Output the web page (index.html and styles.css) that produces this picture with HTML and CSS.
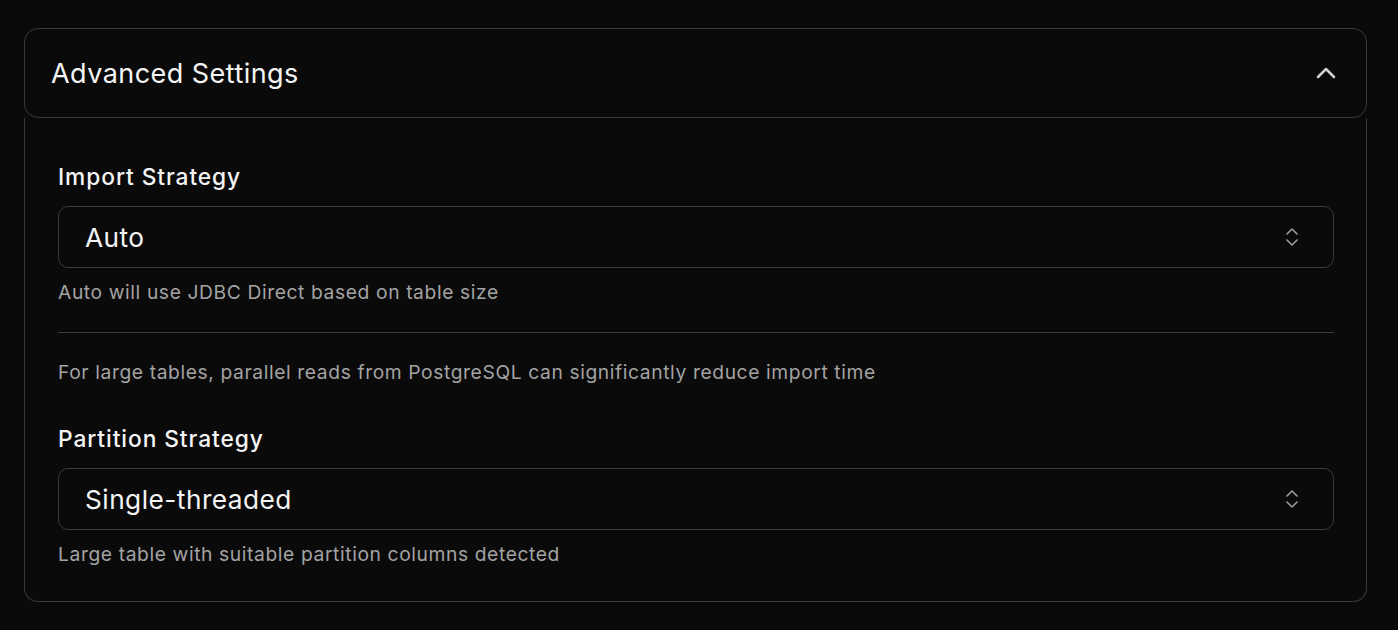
FILE: index.html
```html
<!DOCTYPE html>
<html lang="en">
<head>
<meta charset="utf-8">
<title>Advanced Settings</title>
<link rel="stylesheet" href="styles.css">
</head>
<body>
<section class="card">
  <div class="card-header">
    <h2 class="card-title">Advanced Settings</h2>
    <svg class="chev-up" width="32" height="32" viewBox="0 0 24 24" fill="none" stroke="currentColor" stroke-width="1.9" stroke-linecap="round" stroke-linejoin="round"><path d="m18 15-6-6-6 6"/></svg>
  </div>
  <div class="card-body">
    <div class="field">
      <label class="label">Import Strategy</label>
      <div class="select">
        <span class="select-value">Auto</span>
        <svg class="select-icon" width="24" height="24" viewBox="0 0 24 24" fill="none" stroke="currentColor" stroke-width="1.6" stroke-linecap="round" stroke-linejoin="round"><path d="m7 15 5 5 5-5"/><path d="m7 9 5-5 5 5"/></svg>
      </div>
      <p class="help">Auto will use JDBC Direct based on table size</p>
    </div>
    <hr class="sep">
    <p class="help note">For large tables, parallel reads from PostgreSQL can significantly reduce import time</p>
    <div class="field second">
      <label class="label">Partition Strategy</label>
      <div class="select">
        <span class="select-value">Single-threaded</span>
        <svg class="select-icon" width="24" height="24" viewBox="0 0 24 24" fill="none" stroke="currentColor" stroke-width="1.6" stroke-linecap="round" stroke-linejoin="round"><path d="m7 15 5 5 5-5"/><path d="m7 9 5-5 5 5"/></svg>
      </div>
      <p class="help">Large table with suitable partition columns detected</p>
    </div>
  </div>
</section>
</body>
</html>
```
FILE: styles.css
```css
html, body {
  margin: 0;
  padding: 0;
  background: #0a0a0a;
}
body {
  font-family: Inter, "Noto Sans", "Liberation Sans", sans-serif;
  color: #f5f5f5;
  padding: 28px 31px 0 24px;
}
.card {
  display: flex;
  flex-direction: column;
}
.card-header {
  height: 88px;
  border: 1px solid #3a3a3a;
  border-radius: 14px;
  display: flex;
  align-items: center;
  justify-content: space-between;
  padding: 0 24px 0 26px;
}
.card-title {
  margin: 0;
  font-size: 27px;
  font-weight: 400;
  letter-spacing: 0.45px;
}
.chev-up {
  color: #d0d0d0;
  display: block;
}
.card-body {
  border: 1px solid #3a3a3a;
  border-top: 0;
  border-radius: 0 0 14px 14px;
  padding: 45px 32px 35px 33px;
}
.field {
  display: flex;
  flex-direction: column;
}
.field.second {
  margin-top: 41px;
}
.label {
  font-size: 22.75px;
  line-height: 28px;
  font-weight: 500;
  letter-spacing: 0.92px;
  margin-bottom: 15px;
}
.select {
  height: 60px;
  border: 1px solid #3a3a3a;
  border-radius: 10px;
  display: flex;
  align-items: center;
  justify-content: space-between;
  padding: 0 29px 0 26px;
}
.select-value {
  font-size: 26.25px;
  letter-spacing: 0.47px;
}
.select-icon {
  color: #9a9a9a;
  display: block;
}
.help {
  margin: 12px 0 0;
  font-size: 19.25px;
  line-height: 24px;
  letter-spacing: 0.6px;
  color: #a3a3a3;
}
.sep {
  margin: 28px 0 0;
  border: 0;
  height: 1px;
  background: #3a3a3a;
}
.note {
  margin-top: 27px;
}
```
